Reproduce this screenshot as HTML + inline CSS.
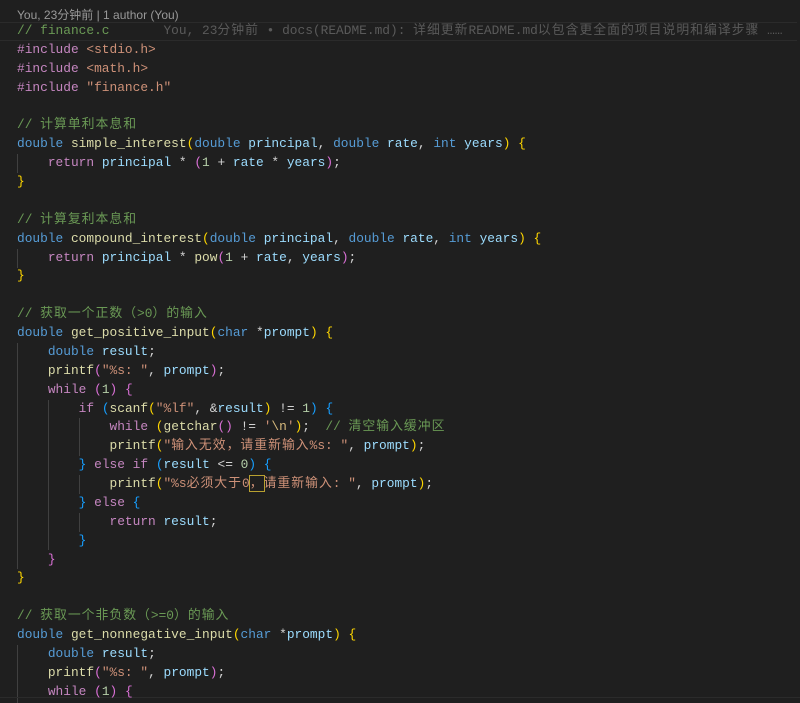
<!DOCTYPE html>
<html><head><meta charset="utf-8"><style>
html,body{margin:0;padding:0;background:#1f1f1f;width:800px;height:703px;overflow:hidden;position:relative}
.hdr{position:absolute;left:17px;top:6px;font:12px "Liberation Sans","Noto Sans CJK SC",sans-serif;color:#999}
.code{position:absolute;left:17px;top:22px;font-family:"Liberation Mono","Noto Sans CJK SC",monospace;font-size:12.85px;color:#d4d4d4}
.l{height:18.886px;line-height:18.886px;white-space:pre}
.k{color:#569cd6}.c{color:#c586c0}.f{color:#dcdcaa}.v{color:#9cdcfe}.s{color:#ce9178}.n{color:#b5cea8}.m{color:#6a9955}.e{color:#d7ba7d}
.b1{color:#ffd700}.b2{color:#da70d6}.b3{color:#179fff}
.blame{color:#5a5a5a}
.cj{letter-spacing:1px}
.cur{position:absolute;left:0;top:22px;width:797px;height:17px;border-top:1px solid #2b2b2b;border-bottom:1px solid #2b2b2b}
.g{position:absolute;width:1px;background:#404040}
.box{outline:1px solid #b8a030}
</style></head><body>
<div class="hdr">You, 23分钟前 | 1 author (You)</div>
<div class="cur"></div>
<div class="g" style="left:17px;top:154px;height:19px"></div>
<div class="g" style="left:17px;top:249px;height:19px"></div>
<div class="g" style="left:17px;top:343px;height:226px"></div>
<div class="g" style="left:48px;top:400px;height:150px"></div>
<div class="g" style="left:79px;top:418px;height:38px"></div>
<div class="g" style="left:79px;top:475px;height:19px"></div>
<div class="g" style="left:79px;top:513px;height:19px"></div>
<div class="g" style="left:17px;top:645px;height:58px"></div>
<div style="position:absolute;left:0;top:697px;width:800px;height:1px;background:#2b2b2b"></div>
<div class="code"><div class="l"><span class="m">// finance.c</span>       <span class="blame">You, 23<span class="cj">分钟前</span> • docs(README.md): <span class="cj">详细更新</span>README.md<span class="cj">以包含更全面的项目说明和编译步骤</span> ……</span></div><div class="l"><span class="c">#include</span> <span class="s">&lt;stdio.h&gt;</span></div><div class="l"><span class="c">#include</span> <span class="s">&lt;math.h&gt;</span></div><div class="l"><span class="c">#include</span> <span class="s">"finance.h"</span></div><div class="l"> </div><div class="l"><span class="m">// <span class="cj">计算单利本息和</span></span></div><div class="l"><span class="k">double</span> <span class="f">simple_interest</span><span class="b1">(</span><span class="k">double</span> <span class="v">principal</span>, <span class="k">double</span> <span class="v">rate</span>, <span class="k">int</span> <span class="v">years</span><span class="b1">)</span> <span class="b1">{</span></div><div class="l">    <span class="c">return</span> <span class="v">principal</span> * <span class="b2">(</span><span class="n">1</span> + <span class="v">rate</span> * <span class="v">years</span><span class="b2">)</span>;</div><div class="l"><span class="b1">}</span></div><div class="l"> </div><div class="l"><span class="m">// <span class="cj">计算复利本息和</span></span></div><div class="l"><span class="k">double</span> <span class="f">compound_interest</span><span class="b1">(</span><span class="k">double</span> <span class="v">principal</span>, <span class="k">double</span> <span class="v">rate</span>, <span class="k">int</span> <span class="v">years</span><span class="b1">)</span> <span class="b1">{</span></div><div class="l">    <span class="c">return</span> <span class="v">principal</span> * <span class="f">pow</span><span class="b2">(</span><span class="n">1</span> + <span class="v">rate</span>, <span class="v">years</span><span class="b2">)</span>;</div><div class="l"><span class="b1">}</span></div><div class="l"> </div><div class="l"><span class="m">// <span class="cj">获取一个正数（</span>&gt;0<span class="cj">）的输入</span></span></div><div class="l"><span class="k">double</span> <span class="f">get_positive_input</span><span class="b1">(</span><span class="k">char</span> *<span class="v">prompt</span><span class="b1">)</span> <span class="b1">{</span></div><div class="l">    <span class="k">double</span> <span class="v">result</span>;</div><div class="l">    <span class="f">printf</span><span class="b2">(</span><span class="s">"%s: "</span>, <span class="v">prompt</span><span class="b2">)</span>;</div><div class="l">    <span class="c">while</span> <span class="b2">(</span><span class="n">1</span><span class="b2">)</span> <span class="b2">{</span></div><div class="l">        <span class="c">if</span> <span class="b3">(</span><span class="f">scanf</span><span class="b1">(</span><span class="s">"%lf"</span>, &amp;<span class="v">result</span><span class="b1">)</span> != <span class="n">1</span><span class="b3">)</span> <span class="b3">{</span></div><div class="l">            <span class="c">while</span> <span class="b1">(</span><span class="f">getchar</span><span class="b2">()</span> != <span class="s">'</span><span class="e">\n</span><span class="s">'</span><span class="b1">)</span>;  <span class="m">// <span class="cj">清空输入缓冲区</span></span></div><div class="l">            <span class="f">printf</span><span class="b1">(</span><span class="s">"<span class="cj">输入无效，请重新输入</span>%s: "</span>, <span class="v">prompt</span><span class="b1">)</span>;</div><div class="l">        <span class="b3">}</span> <span class="c">else</span> <span class="c">if</span> <span class="b3">(</span><span class="v">result</span> &lt;= <span class="n">0</span><span class="b3">)</span> <span class="b3">{</span></div><div class="l">            <span class="f">printf</span><span class="b1">(</span><span class="s">"%s<span class="cj">必须大于</span>0<span class="box cj">，</span><span class="cj">请重新输入</span>: "</span>, <span class="v">prompt</span><span class="b1">)</span>;</div><div class="l">        <span class="b3">}</span> <span class="c">else</span> <span class="b3">{</span></div><div class="l">            <span class="c">return</span> <span class="v">result</span>;</div><div class="l">        <span class="b3">}</span></div><div class="l">    <span class="b2">}</span></div><div class="l"><span class="b1">}</span></div><div class="l"> </div><div class="l"><span class="m">// <span class="cj">获取一个非负数（</span>&gt;=0<span class="cj">）的输入</span></span></div><div class="l"><span class="k">double</span> <span class="f">get_nonnegative_input</span><span class="b1">(</span><span class="k">char</span> *<span class="v">prompt</span><span class="b1">)</span> <span class="b1">{</span></div><div class="l">    <span class="k">double</span> <span class="v">result</span>;</div><div class="l">    <span class="f">printf</span><span class="b2">(</span><span class="s">"%s: "</span>, <span class="v">prompt</span><span class="b2">)</span>;</div><div class="l">    <span class="c">while</span> <span class="b2">(</span><span class="n">1</span><span class="b2">)</span> <span class="b2">{</span></div></div>
</body></html>
